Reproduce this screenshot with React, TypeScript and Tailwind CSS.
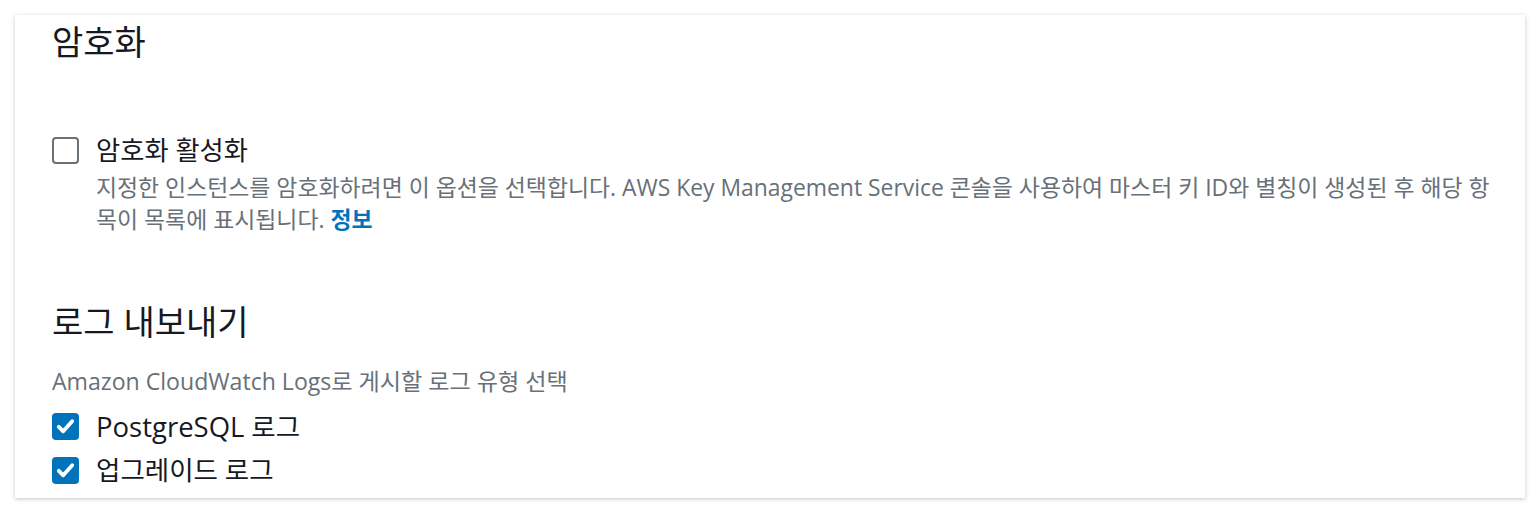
import React from "react";

const font = { fontFamily: '"Open Sans", "Noto Sans CJK KR", sans-serif' };

function Check({ checked }: { checked: boolean }) {
  if (checked) {
    return (
      <div className="w-[27px] h-[27px] rounded-[4px] bg-[#0073bb] shrink-0">
        <svg width="27" height="27" viewBox="0 0 27 27" fill="none">
          <path d="M6.8 13.8 L11.2 18.3 L20.2 8.2" stroke="white" strokeWidth="3.8" strokeLinecap="round" strokeLinejoin="round" />
        </svg>
      </div>
    );
  }
  return <div className="w-[27px] h-[27px] rounded-[4px] border-2 border-[#687078] bg-white shrink-0" />;
}

export default function App() {
  return (
    <div className="bg-white w-[1540px] h-[514px] pt-[15px] pl-[15px] pr-[15px]" style={font}>
      <div className="bg-white w-[1510px] h-[483px] shadow-[0_1px_4px_rgba(0,22,37,0.25)] pl-[37px] pr-[30px] pt-[7px]">
        <h2 className="text-[34px] leading-[40px] h-[40px] text-[#16191f] font-normal">암호화</h2>
        <div className="mt-[75px] flex items-start gap-[17px]">
          <Check checked={false} />
          <div>
            <div className="h-[27px] leading-[27px] text-[26.3px] text-[#16191f] whitespace-nowrap">암호화 활성화</div>
            <div className="mt-[8px] text-[22.9px] text-[#687078]">
              <div className="h-[32px] leading-[32px] whitespace-nowrap">
                지정한 인스턴스를 암호화하려면 이 옵션을 선택합니다. AWS Key Management Service 콘솔을 사용하여 마스터 키 ID와 별칭이 생성된 후 해당 항
              </div>
              <div className="h-[32px] leading-[32px] whitespace-nowrap">
                목이 목록에 표시됩니다. <a className="text-[#0073bb] font-bold">정보</a>
              </div>
            </div>
          </div>
        </div>
        <h2 className="mt-[66px] text-[34px] leading-[40px] h-[40px] text-[#16191f] font-normal">로그 내보내기</h2>
        <div className="mt-[25px] h-[28px] leading-[28px] text-[23.1px] text-[#687078] whitespace-nowrap">
          Amazon CloudWatch Logs로 게시할 로그 유형 선택
        </div>
        <div className="mt-[18px] flex flex-col gap-[17px]">
          <div className="flex items-center gap-[17px]">
            <Check checked={true} />
            <span className="h-[27px] leading-[27px] text-[26.5px] text-[#16191f] whitespace-nowrap">
              <span className="text-[27.5px]">PostgreSQL</span> 로그
            </span>
          </div>
          <div className="flex items-center gap-[17px]">
            <Check checked={true} />
            <span className="h-[27px] leading-[27px] text-[26.5px] text-[#16191f] whitespace-nowrap">업그레이드 로그</span>
          </div>
        </div>
      </div>
    </div>
  );
}
